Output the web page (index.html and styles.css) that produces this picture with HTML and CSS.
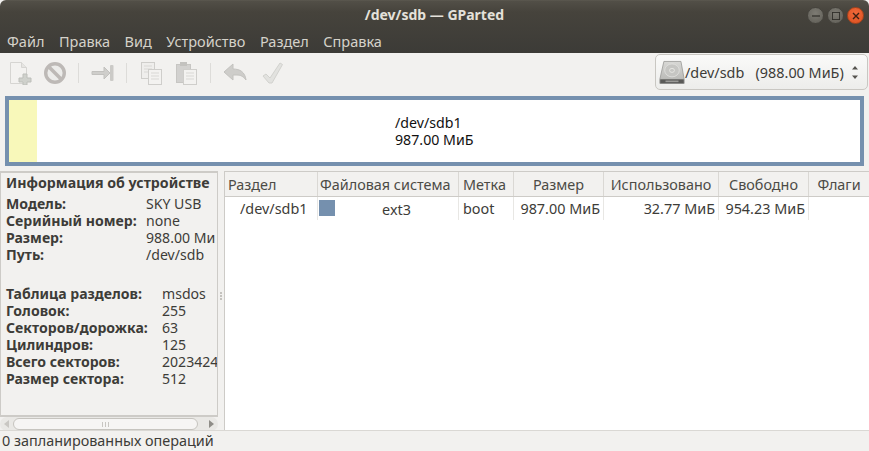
FILE: index.html
```html
<!DOCTYPE html>
<html lang="ru">
<head>
<meta charset="utf-8">
<title>/dev/sdb — GParted</title>
<link rel="stylesheet" href="styles.css">
</head>
<body>
<div class="chrome">
  <header class="titlebar">
    <span class="title">/dev/sdb — GParted</span>
    <div class="winbtns">
      <span class="wb"><svg width="10" height="10" viewBox="0 0 10 10"><path d="M0 5h10" stroke="#2f2e29" stroke-width="1.5"/></svg></span>
      <span class="wb"><svg width="10" height="10" viewBox="0 0 10 10"><rect x="0.5" y="0.5" width="9" height="9" fill="none" stroke="#2f2e29" stroke-width="1.2"/></svg></span>
      <span class="wb wb-close"><svg width="8" height="8" viewBox="0 0 8 8"><path d="M1 1l6 6M7 1l-6 6" stroke="#3d2013" stroke-width="1.4"/></svg></span>
    </div>
  </header>
  <nav class="menubar">
    <span>Файл</span><span>Правка</span><span>Вид</span><span>Устройство</span><span>Раздел</span><span>Справка</span>
  </nav>
</div>
<div class="toolbar">
  <span class="tool"><svg width="24" height="24" viewBox="0 0 24 24"><path d="M2.500 1.500h11l5 5v16h-16z" fill="#f3f2f0" stroke="#d6d5d2"/><path d="M13.500 1.500v5h5" fill="#e6e5e2" stroke="#d6d5d2"/><path d="M15 13h4v4h4v4h-4v3h-4v-3h-4v-4h4z" fill="#cfd1cc" stroke="#bdbfba"/></svg></span>
  <span class="tool"><svg width="24" height="24" viewBox="0 0 24 24"><circle cx="12" cy="12" r="9.300" fill="#ececea" stroke="#bdb9b6" stroke-width="3.400"/><path d="M5.500 5.500l13 13" stroke="#bdb9b6" stroke-width="3.600"/></svg></span>
  <i class="sep"></i>
  <span class="tool"><svg width="24" height="24" viewBox="0 0 24 24"><path d="M1 10.500h12V6l6 6-6 6v-4.500H1z" fill="#cfcecb" stroke="#c2c1be"/><rect x="19" y="4" width="3.500" height="16" rx="1" fill="#cbcac7"/></svg></span>
  <i class="sep"></i>
  <span class="tool"><svg width="24" height="24" viewBox="0 0 24 24"><rect x="2.500" y="1.500" width="13" height="16" fill="#efeeec" stroke="#cfcecb"/><path d="M5 5h8M5 8h8M5 11h8" stroke="#d9d8d5"/><rect x="9.500" y="8.500" width="13" height="15" fill="#f3f2f0" stroke="#cfcecb"/><path d="M12 12h8M12 15h8M12 18h8" stroke="#d9d8d5"/></svg></span>
  <span class="tool"><svg width="24" height="24" viewBox="0 0 24 24"><rect x="2.500" y="3.500" width="14" height="18" fill="#d2d1cf" stroke="#c7c6c3"/><rect x="6" y="1" width="7" height="4" fill="#c3c2bf"/><rect x="9.500" y="8.500" width="13" height="15" fill="#f3f2f0" stroke="#cfcecb"/><path d="M12 12h8M12 15h8M12 18h8" stroke="#d9d8d5"/></svg></span>
  <i class="sep sep-last"></i>
  <span class="tool"><svg width="24" height="24" viewBox="0 0 24 24"><path d="M1 11 10 3v5c7 0 12 3 13 11-3-4-6-5-9-5h-4v5z" fill="#cecdca" stroke="#c3c2bf" stroke-linejoin="round"/></svg></span>
  <span class="tool tool-last"><svg width="24" height="24" viewBox="0 0 24 24"><path d="M2 15l3-2 4 4L19 2l2.500 1.500L11 22H8z" fill="#e2e2df" stroke="#d2d2ce" stroke-linejoin="round"/></svg></span>
  <div class="devpick">
    <svg class="hdd" width="32" height="32" viewBox="0 0 32 32"><defs><linearGradient id="hd" x1="0" y1="0" x2="0" y2="1"><stop offset="0" stop-color="#d8d8d5"/><stop offset="1" stop-color="#b4b4b1"/></linearGradient></defs><path d="M6 3h21l4 22v5H1v-5z" fill="url(#hd)" stroke="#9a9a97"/><ellipse cx="16" cy="14" rx="9" ry="8" fill="#c6c6c3" stroke="#e2e2df"/><ellipse cx="16" cy="14" rx="3" ry="2.500" fill="none" stroke="#ebebe8"/><rect x="1.500" y="25" width="29" height="5" fill="#5a5a58"/><rect x="8" y="26.500" width="16" height="2" fill="#9a9a97"/></svg>
    <span class="devname">/dev/sdb&nbsp;&nbsp; (988.00 МиБ)</span>
    <svg class="updown" width="6" height="13" viewBox="0 0 6 13"><path d="M3 0l3 3.500H0zM3 13L0 9.500h6z" fill="#55534e"/></svg>
  </div>
</div>
<section class="graph">
  <div class="unalloc"></div>
  <div class="partlabel">/dev/sdb1<br>987.00 МиБ</div>
</section>
<main class="panes">
  <aside class="side">
    <div class="info">
      <h2>Информация об устройстве</h2>
      <dl class="kv kv1">
        <dt>Модель:</dt><dd>SKY USB</dd>
        <dt>Серийный номер:</dt><dd>none</dd>
        <dt>Размер:</dt><dd>988.00 Ми</dd>
        <dt>Путь:</dt><dd>/dev/sdb</dd>
      </dl>
      <dl class="kv kv2">
        <dt>Таблица разделов:</dt><dd>msdos</dd>
        <dt>Головок:</dt><dd>255</dd>
        <dt>Секторов/дорожка:</dt><dd>63</dd>
        <dt>Цилиндров:</dt><dd>125</dd>
        <dt>Всего секторов:</dt><dd>2023424</dd>
        <dt>Размер сектора:</dt><dd>512</dd>
      </dl>
    </div>
    <div class="hscroll">
      <svg width="6" height="8" viewBox="0 0 6 8"><path d="M5 0v8L0 4z" fill="#c9c7c3"/></svg>
      <div class="thumb"><i></i><i></i><i></i></div>
      <svg width="6" height="8" viewBox="0 0 6 8"><path d="M0 0v8l5-4z" fill="#8f8d88"/></svg>
    </div>
  </aside>
  <div class="grip"><i></i><i></i><i></i></div>
  <section class="list">
    <div class="row head">
      <span class="c1">Раздел</span><span class="c2">Файловая система</span><span class="c3">Метка</span><span class="c4 ctr">Размер</span><span class="c5 ctr">Использовано</span><span class="c6 ctr">Свободно</span><span class="c7 ctr">Флаги</span>
    </div>
    <div class="row body">
      <span class="c1 indent">/dev/sdb1</span>
      <span class="c2 fs"><b class="swatch"></b><em>ext3</em></span>
      <span class="c3">boot</span>
      <span class="c4 num">987.00 МиБ</span>
      <span class="c5 num">32.77 МиБ</span>
      <span class="c6 num">954.23 МиБ</span>
      <span class="c7"></span>
    </div>
  </section>
</main>
<footer class="status">0 запланированных операций</footer>
</body>
</html>
```
FILE: styles.css
```css
* { box-sizing: border-box; }
html, body { margin: 0; height: 100%; }
body {
  width: 869px; height: 451px; overflow: hidden;
  display: flex; flex-direction: column;
  background: #f2f1ef; color: #3d3c38;
  font: 14.400px/17px "Noto Sans", "Open Sans", sans-serif;
}
.chrome { background: linear-gradient(#5f5c53 0, #524f47 1px, #46433c 12px, #3c3b37 53px); height: 53px; flex: none; border-radius: 6px 6px 0 0; }
.titlebar { height: 28px; display: flex; align-items: center; justify-content: center; position: relative; }
.title { color: #e4e1da; font-weight: 700; font-size: 14px; margin-top: 1px; }
.winbtns { position: absolute; right: 5px; top: 7px; display: flex; gap: 3px; }
.wb { width: 17px; height: 17px; border-radius: 50%; background: radial-gradient(circle at 50% 35%, #7d7b73, #5f5d56); border: 1px solid #45433d; display: flex; align-items: center; justify-content: center; }
.wb svg { width: 8px; height: 8px; }
.wb-close { background: radial-gradient(circle at 50% 35%, #f0693a, #dc5020); border-color: #a9431c; }
.menubar { height: 25px; display: flex; gap: 14.500px; padding: 1px 0 0 7px; align-items: center; color: #d5d2ca; font-size: 14.500px; }
.toolbar { height: 39px; flex: none; display: flex; align-items: center; padding: 0 1px 0 8px; }
.tool { width: 24px; height: 24px; margin-right: 11px; flex: none; }
.tool svg { display: block; }
.tool-last { margin-left: 3px; }
.sep { width: 1px; height: 20px; background: #dddcd9; margin-right: 12px; flex: none; }
.sep-last { margin-left: 1px; }
.devpick {
  margin-left: auto; width: 213px; height: 36px; align-self: flex-start; margin-top: 1px;
  border: 1px solid #c9c7c2; border-radius: 5px; background: linear-gradient(#fafaf9, #ededeb);
  display: flex; align-items: center; padding: 0 9px 0 3px; color: #3d3c38;
}
.hdd { flex: none; width: 26px; height: 26px; }
.devname { flex: 1; white-space: nowrap; }
.updown { flex: none; }
.graph {
  flex: none; height: 70px; margin: 4px 5px 0; border: 4px solid #7590ae;
  background: #fff; display: flex; position: relative; color: #111;
}
.unalloc { width: 28px; background: #f8f8ba; flex: none; }
.partlabel { position: absolute; left: 386px; top: 14px; line-height: 17px; font-size: 14.200px; }
.panes { flex: 1; min-height: 0; display: flex; margin-top: 5px; }
.side { width: 218px; flex: none; display: flex; flex-direction: column; }
.info { flex: 1; min-height: 0; border: 2px solid #cdcbc7; border-left-width: 1px; border-right-width: 1px; padding: 0 0 0 5px; overflow: hidden; white-space: nowrap; }
.info h2 { margin: 0; font-size: 14.200px; line-height: 17px; padding-top: 1px; font-weight: 700; }
.kv { margin: 4px 0 0; display: grid; grid-auto-rows: 17px; font-size: 14.100px; }
.kv dt { font-weight: 700; }
.kv dd { margin: 0; }
.kv1 { grid-template-columns: 140px 80px; }
.kv2 { grid-template-columns: 156px 80px; margin-top: 22px; }
.hscroll { height: 14px; flex: none; display: flex; align-items: center; gap: 3px; padding: 0 3px 0 4px; background: #e9e8e5; border-radius: 7px; }
.thumb { flex: 1; height: 12px; border: 1px solid #c6c4bf; border-radius: 7px; background: #f6f5f4; display: flex; align-items: center; justify-content: center; gap: 2px; margin-right: 8px; }
.thumb i { width: 1px; height: 5px; background: #c8c6c2; }
.grip { width: 6px; flex: none; display: flex; flex-direction: column; align-items: center; justify-content: center; gap: 1px; padding-bottom: 11px; }
.grip i { width: 2px; height: 2px; background: #c4c2be; }
.list { flex: 1; min-width: 0; background: #fff; border: 1px solid #cdcbc7; border-right: 0; }
.row { display: grid; grid-template-columns: 93px 141px 55px 90px 115px 90px 1fr; white-space: nowrap; }
.head { height: 25px; background: #f2f1ef; border-bottom: 1px solid #cdcbc7; }
.head span { display: flex; align-items: center; padding: 0 3px; border-right: 1px solid #dad8d4; color: #4c4b46; }
.head .ctr { justify-content: center; }
.head .c2 { padding-left: 2px; }
.head .c3 { padding-left: 4px; }
.head .c7 { border-right: 0; }
.body { height: 23px; }
.body span { display: flex; align-items: center; padding: 0 3px 1px; border-right: 1px solid #e8e7e4; }
.body .c7 { border-right: 0; }
.body .c3 { padding-left: 4px; }
.body .indent { padding-left: 15px; }
.body .num { justify-content: flex-end; padding-right: 3px; }
.body .fs { padding: 0 0 0 1px; }
.swatch { width: 16px; height: 16px; background: #7590ae; flex: none; align-self: flex-start; margin-top: 3px; }
.fs em { font-style: normal; flex: 1; text-align: center; padding-top: 1px; }
.status { height: 21px; flex: none; padding: 1px 0 0 2px; line-height: 17px; border-top: 1px solid #dad8d4; margin-top: -1px; position: relative; background: #f2f1ef; }
```
